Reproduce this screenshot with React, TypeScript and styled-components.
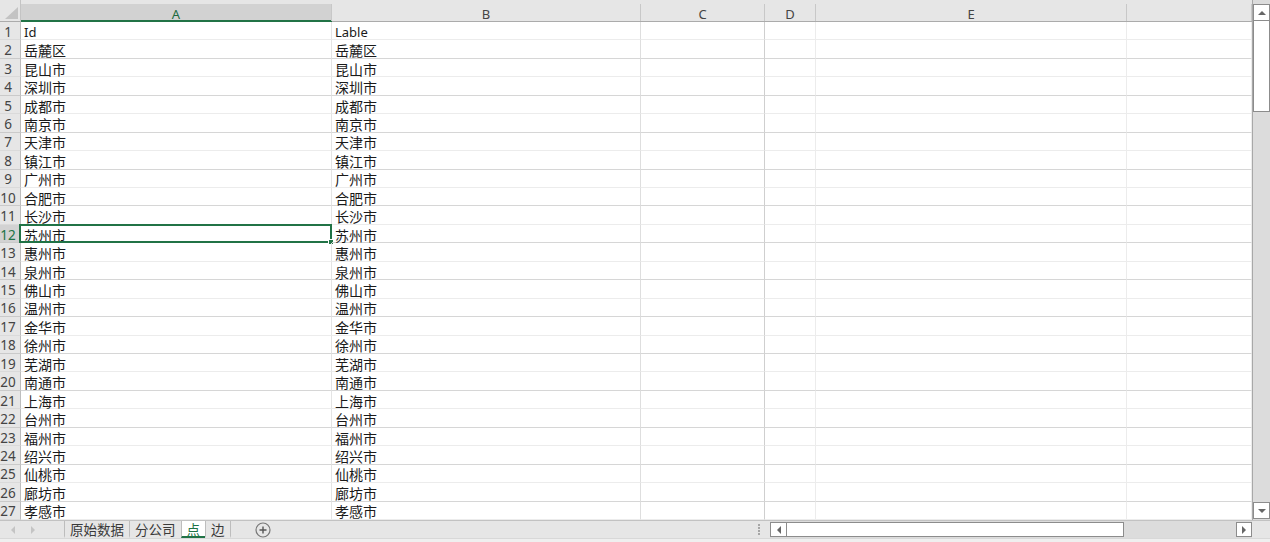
import React from "react";
import styled, { createGlobalStyle } from "styled-components";

const GREEN = "#217346";
const CJK = `"Noto Sans CJK SC", "Noto Sans", sans-serif`;
const LATIN = `"Noto Sans", "Noto Sans CJK SC", sans-serif`;

const GlobalStyle = createGlobalStyle`
  html, body { margin: 0; padding: 0; background: #fff; overflow: hidden; }
  * { box-sizing: border-box; }
`;

const cities = [
  "岳麓区", "昆山市", "深圳市", "成都市", "南京市", "天津市", "镇江市", "广州市",
  "合肥市", "长沙市", "苏州市", "惠州市", "泉州市", "佛山市", "温州市", "金华市",
  "徐州市", "芜湖市", "南通市", "上海市", "台州市", "福州市", "绍兴市", "仙桃市",
  "廊坊市", "孝感市",
];

const columns = [
  { name: "A", line: "#e4e4e4" },
  { name: "B", line: "#dedede" },
  { name: "C", line: "#cfcfcf" },
  { name: "D", line: "#ececec" },
  { name: "E", line: "#ececec" },
  { name: "", line: "#ececec" },
];

const Frame = styled.div`
  width: 1270px;
  height: 542px;
  display: grid;
  grid-template-rows: 520px 22px;
  font-family: ${CJK};
  background: #fff;
`;

const Main = styled.div`
  display: flex;
  min-height: 0;
`;

const Sheet = styled.div`
  flex: 1;
  display: grid;
  grid-template-columns: 21px 311px 309px 124px 51px 311px 125px;
  grid-template-rows: 22px repeat(27, 1fr);
`;

const Corner = styled.div`
  background: #e6e6e6;
  border-right: 1px solid #c4c4c4;
  border-bottom: 1px solid #ababab;
  display: flex;
  align-items: flex-end;
  justify-content: flex-end;
  padding: 0 2px 2px 0;
`;

const ColHeader = styled.div<{ $active?: boolean }>`
  background: #e6e6e6;
  padding-top: 4px;
  border-bottom: 1px solid ${(p) => (p.$active ? GREEN : "#ababab")};
`;

const ColLabel = styled.div<{ $active?: boolean }>`
  height: 100%;
  display: flex;
  align-items: center;
  justify-content: center;
  padding-top: 2px;
  background: ${(p) => (p.$active ? "#d2d2d2" : "#e6e6e6")};
  border-right: 1px solid #c8c8c8;
  box-shadow: ${(p) => (p.$active ? `inset 0 -1px 0 ${GREEN}` : "none")};
  font-family: ${LATIN};
  font-size: 13px;
  color: ${(p) => (p.$active ? "#1e6b3f" : "#444")};
`;

const RowHeader = styled.div<{ $active?: boolean; $dark?: boolean }>`
  background: ${(p) => (p.$active ? "#d2d2d2" : "#e6e6e6")};
  border-right: 1px solid #bdbdbd;
  border-bottom: 1px solid ${(p) => (p.$dark ? "#cacaca" : "#dadada")};
  display: flex;
  align-items: center;
  justify-content: center;
  padding: 2px 4px 0 0;
  font-family: ${LATIN};
  font-size: 13.5px;
  color: ${(p) => (p.$active ? GREEN : "#444")};
  min-height: 0;
`;

const Cell = styled.div<{ $line: string; $dark?: boolean; $latin?: boolean }>`
  position: relative;
  border-right: 1px solid ${(p) => p.$line};
  border-bottom: 1px solid ${(p) => (p.$dark ? "#d6d6d6" : "#ececec")};
  display: flex;
  align-items: center;
  padding: 2px 0 0 3px;
  font-family: ${(p) => (p.$latin ? LATIN : CJK)};
  font-size: ${(p) => (p.$latin ? 13 : 14)}px;
  color: #1a1a1a;
  white-space: nowrap;
  min-height: 0;
`;

const Selection = styled.div`
  position: absolute;
  top: -1px;
  left: -2px;
  right: -1px;
  bottom: -1px;
  border: 2px solid ${GREEN};
  pointer-events: none;
`;

const Handle = styled.div`
  position: absolute;
  right: -4px;
  bottom: -4px;
  width: 6px;
  height: 6px;
  background: ${GREEN};
  border: 1px solid #fff;
`;

const VScroll = styled.div`
  width: 18px;
  background: #dcdcdc;
  border-left: 1px solid #a8a8a8;
  display: flex;
  flex-direction: column;
  padding: 4px 0 1px 0;
`;

const ScrollButton = styled.div<{ $w?: number; $h?: number }>`
  width: ${(p) => p.$w ?? 17}px;
  height: ${(p) => p.$h ?? 17}px;
  flex: none;
  background: #fff;
  border: 1px solid #8c8c8c;
  display: flex;
  align-items: center;
  justify-content: center;
`;

const VThumb = styled.div`
  height: 91px;
  background: #fff;
  border: 1px solid #8c8c8c;
  border-top: none;
  flex: none;
`;

const Fill = styled.div`
  flex: 1;
`;

const Bottom = styled.div`
  display: flex;
  flex-direction: column;
  background: #e6e6e6;
  border-top: 1px solid #c2c2c2;
`;

const TabRow = styled.div`
  height: 17px;
  display: flex;
  align-items: stretch;
`;

const Footer = styled.div`
  flex: 1;
  background: #efefef;
  border-top: 1px solid #d8d8d8;
`;

const Nav = styled.div`
  width: 64px;
  flex: none;
  display: flex;
  align-items: center;
  padding-left: 3px;
`;

const NavArrow = styled.div`
  width: 20px;
  display: flex;
  justify-content: center;
`;

const Tab = styled.div<{ $active?: boolean }>`
  border-left: 1px solid #bdbdbd;
  padding: 0 5px 0 5px;
  font-size: 13.5px;
  line-height: 16px;
  color: ${(p) => (p.$active ? GREEN : "#3a3a3a")};
  background: ${(p) => (p.$active ? "#fff" : "transparent")};
  border-bottom: 2px solid ${(p) => (p.$active ? GREEN : "transparent")};
  white-space: nowrap;
  &:last-child {
    border-right: 1px solid #bdbdbd;
  }
`;

const Tabs = styled.div`
  display: flex;
  align-items: stretch;
`;

const AddSheet = styled.div`
  margin-left: 24px;
  width: 16px;
  display: flex;
  align-items: center;
`;

const Splitter = styled.div`
  width: 22px;
  flex: none;
  display: flex;
  justify-content: center;
  align-items: center;
`;

const Dots = styled.div`
  width: 2px;
  height: 12px;
  background: repeating-linear-gradient(to bottom, #a6a6a6 0 2px, transparent 2px 3px);
`;

const HScroll = styled.div`
  width: 482px;
  flex: none;
  display: flex;
  padding: 1px 0;
  background: #dcdcdc;
`;

const HThumb = styled.div`
  width: 337px;
  flex: none;
  background: #fff;
  border: 1px solid #8c8c8c;
  border-left: none;
`;

const BottomCorner = styled.div`
  width: 18px;
  flex: none;
`;

const Tri = ({ dir, color = "#666" }: { dir: "up" | "down" | "left" | "right"; color?: string }) => {
  const pts = {
    up: "0,5 4,1 8,5",
    down: "0,1 8,1 4,5",
    left: "5,0 5,8 1,4",
    right: "1,0 1,8 5,4",
  }[dir];
  const vertical = dir === "up" || dir === "down";
  return (
    <svg width={vertical ? 8 : 6} height={vertical ? 6 : 8} viewBox={vertical ? "0 0 8 6" : "0 0 6 8"}>
      <polygon points={pts} fill={color} />
    </svg>
  );
};

export default function App() {
  const rows: { id: string; label: string; latin?: boolean }[] = [
    { id: "Id", label: "Lable", latin: true },
    ...cities.map((c) => ({ id: c, label: c })),
  ];
  const selectedRow = 12;

  return (
    <>
      <GlobalStyle />
      <Frame>
        <Main>
          <Sheet>
            <Corner>
              <svg width="13" height="12" viewBox="0 0 13 12">
                <polygon points="13,0 13,12 0,12" fill="#c3c3c3" />
              </svg>
            </Corner>
            {columns.map((c, i) => (
              <ColHeader key={`h${i}`} $active={i === 0}>
                <ColLabel $active={i === 0}>{c.name}</ColLabel>
              </ColHeader>
            ))}
            {rows.map((r, ri) => {
              const n = ri + 1;
              const dark = n % 2 === 0;
              const active = n === selectedRow;
              return (
                <React.Fragment key={n}>
                  <RowHeader $active={active} $dark={dark}>
                    {n}
                  </RowHeader>
                  {columns.map((c, ci) => (
                    <Cell key={ci} $line={c.line} $dark={dark} $latin={r.latin}>
                      {ci === 0 ? r.id : ci === 1 ? r.label : ""}
                      {ci === 0 && active && (
                        <Selection>
                          <Handle />
                        </Selection>
                      )}
                    </Cell>
                  ))}
                </React.Fragment>
              );
            })}
          </Sheet>
          <VScroll>
            <ScrollButton>
              <Tri dir="up" />
            </ScrollButton>
            <VThumb />
            <Fill />
            <ScrollButton>
              <Tri dir="down" />
            </ScrollButton>
          </VScroll>
        </Main>
        <Bottom>
          <TabRow>
            <Nav>
              <NavArrow>
                <Tri dir="left" color="#c4c4c4" />
              </NavArrow>
              <NavArrow>
                <Tri dir="right" color="#c4c4c4" />
              </NavArrow>
            </Nav>
            <Tabs>
              <Tab>原始数据</Tab>
              <Tab>分公司</Tab>
              <Tab $active>点</Tab>
              <Tab>边</Tab>
            </Tabs>
            <AddSheet>
              <svg width="16" height="16" viewBox="0 0 16 16">
                <circle cx="8" cy="8" r="7" fill="none" stroke="#777" strokeWidth="1.2" />
                <path d="M8 4.5v7M4.5 8h7" stroke="#555" strokeWidth="1.4" />
              </svg>
            </AddSheet>
            <Fill />
            <Splitter>
              <Dots />
            </Splitter>
            <HScroll>
              <ScrollButton $w={17} $h={15}>
                <Tri dir="left" />
              </ScrollButton>
              <HThumb />
              <Fill />
              <ScrollButton $w={16} $h={15}>
                <Tri dir="right" />
              </ScrollButton>
            </HScroll>
            <BottomCorner />
          </TabRow>
          <Footer />
        </Bottom>
      </Frame>
    </>
  );
}
